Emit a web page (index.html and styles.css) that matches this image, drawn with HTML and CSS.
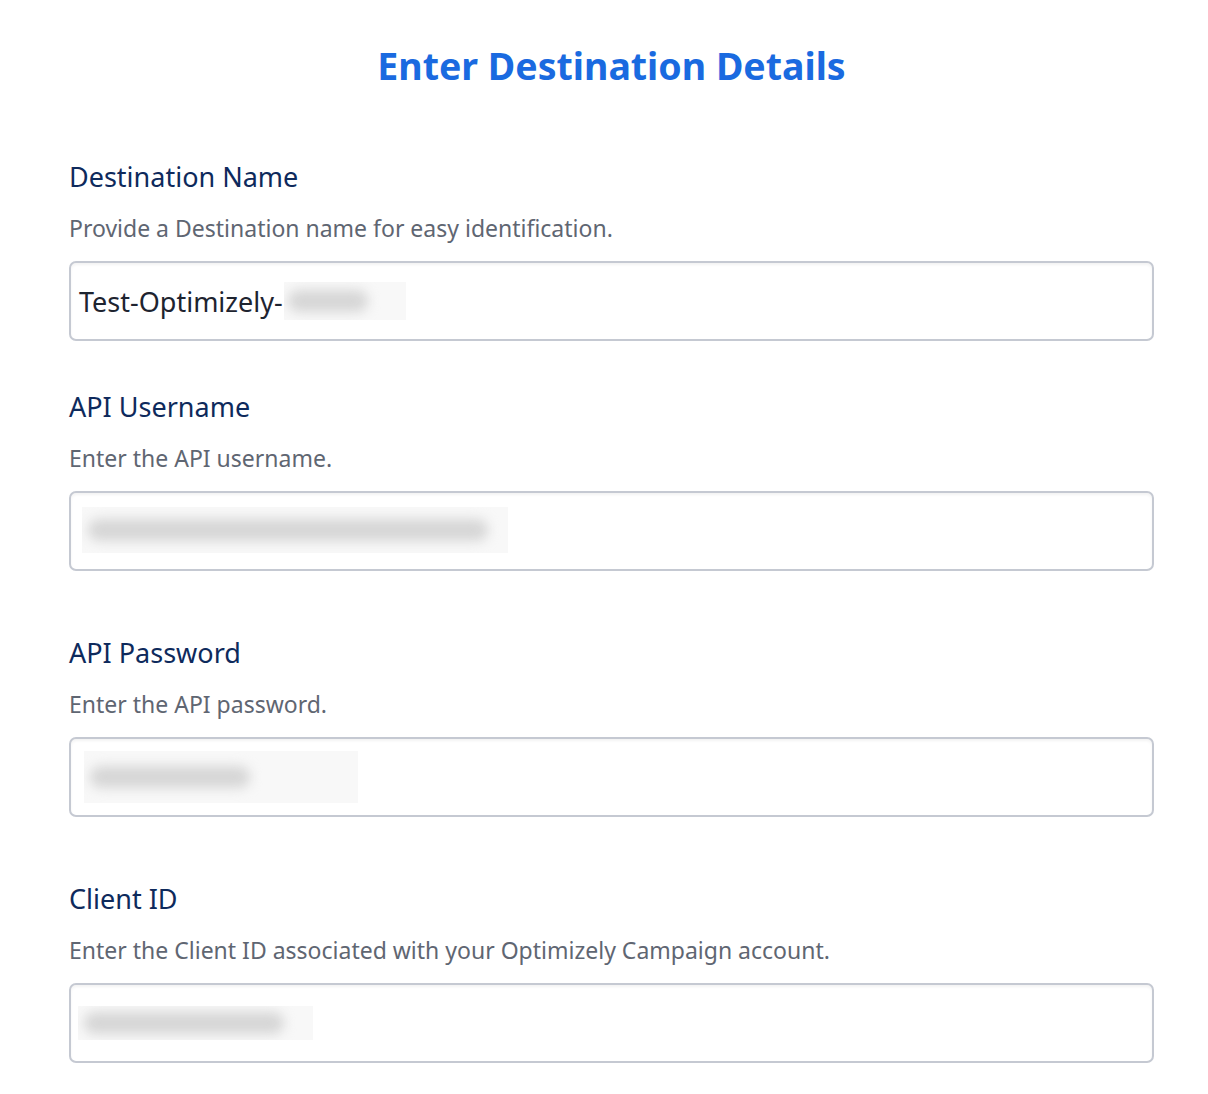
FILE: index.html
```html
<!DOCTYPE html>
<html>
<head>
<meta charset="utf-8">
<link rel="stylesheet" href="styles.css">
</head>
<body>
<div class="page">
  <h1 class="title">Enter Destination Details</h1>
  <div class="field first">
    <div class="label">Destination Name</div>
    <div class="desc">Provide a Destination name for easy identification.</div>
    <div class="input"><span class="value">Test-Optimizely-</span><span class="blur b1"><span class="smear"></span></span></div>
  </div>
  <div class="field second">
    <div class="label">API Username</div>
    <div class="desc">Enter the API username.</div>
    <div class="input"><span class="blur b2"><span class="smear"></span></span></div>
  </div>
  <div class="field">
    <div class="label">API Password</div>
    <div class="desc">Enter the API password.</div>
    <div class="input"><span class="blur b3"><span class="smear"></span></span></div>
  </div>
  <div class="field">
    <div class="label">Client ID</div>
    <div class="desc">Enter the Client ID associated with your Optimizely Campaign account.</div>
    <div class="input"><span class="blur b4"><span class="smear"></span></span></div>
  </div>
</div>
</body>
</html>
```
FILE: styles.css
```css
html, body {
  margin: 0;
  padding: 0;
  background: #ffffff;
}
body {
  font-family: "Noto Sans", "Open Sans", sans-serif;
}
.page {
  width: 1085px;
  margin-left: 69px;
  padding-top: 40px;
}
.title {
  margin: 0;
  text-align: center;
  color: #1a6ae0;
  font-size: 37.5px;
  font-weight: 700;
  line-height: 52px;
}
.field {
  margin-top: 65px;
}
.field.first {
  margin-top: 68px;
}
.field.second {
  margin-top: 49px;
}
.label {
  color: #0e2a5c;
  font-size: 27px;
  line-height: 34px;
}
.desc {
  margin-top: 19px;
  color: #5f6672;
  font-size: 23px;
  line-height: 30px;
}
.input {
  margin-top: 18px;
  box-sizing: border-box;
  height: 80px;
  border: 2px solid #c5c9d2;
  border-radius: 7px;
  box-shadow: inset 0 2px 3px rgba(0,0,0,0.05);
  display: flex;
  align-items: center;
  padding-left: 8px;
}
.value {
  color: #1e2430;
  font-size: 27px;
}
.blur {
  display: flex;
  align-items: center;
  background: #f8f8f8;
  overflow: hidden;
}
.smear {
  display: block;
  height: 22px;
  margin-left: 6px;
  border-radius: 11px;
  background: #d6d6d6;
  filter: blur(6px);
}
.b1 { width: 122px; height: 38px; margin-left: 1px; }
.b1 .smear { width: 80px; margin-left: 4px; }
.b2 { width: 426px; height: 46px; margin-left: 3px; margin-top: -2px; }
.b2 .smear { width: 400px; }
.b3 { width: 274px; height: 52px; margin-left: 5px; }
.b3 .smear { width: 160px; }
.b4 { width: 235px; height: 34px; margin-left: -1px; }
.b4 .smear { width: 200px; }
```
